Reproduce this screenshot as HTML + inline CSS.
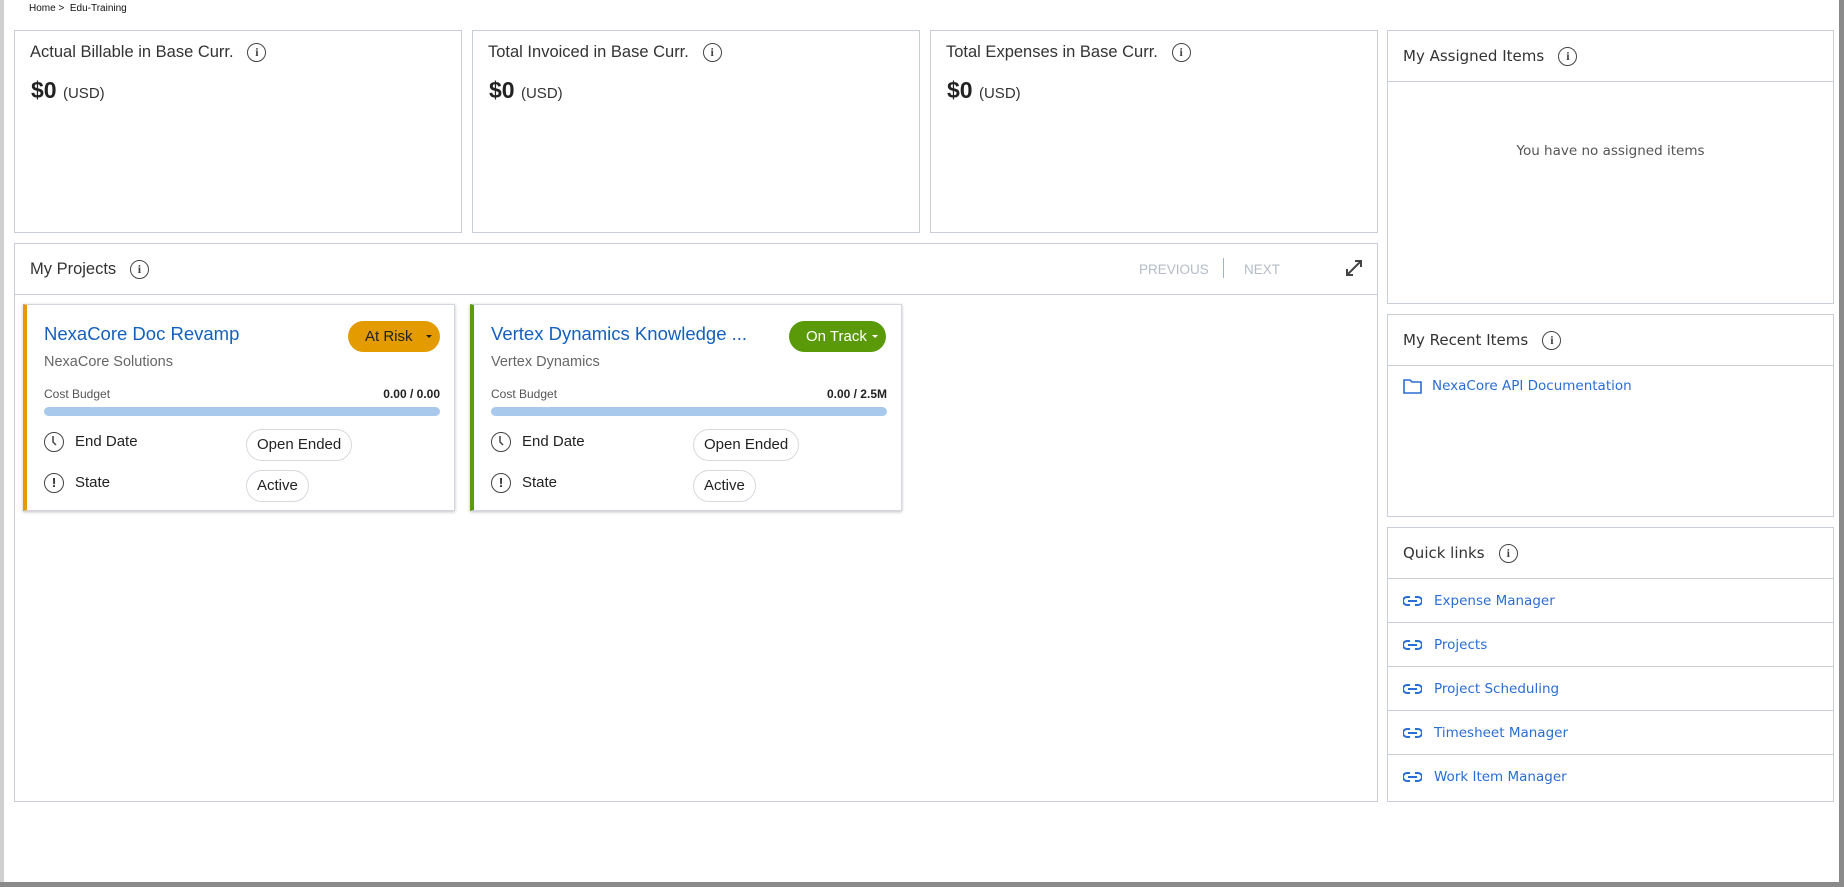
<!DOCTYPE html>
<html><head><meta charset="utf-8"><style>
*{box-sizing:border-box;margin:0;padding:0}
body{width:1844px;height:887px;background:#fff;font-family:"Liberation Sans",sans-serif;color:#333;position:relative;overflow:hidden}
.abs{position:absolute}
.card{position:absolute;border:1px solid #c9ced6;background:#fff}
.ttl{position:absolute;font-size:16.5px;color:#333}
.info{display:inline-block;width:19px;height:19px;border:1.5px solid #444;border-radius:50%;text-align:center;font:bold 12px/16px "Liberation Serif",serif;color:#444;vertical-align:middle}
.val{position:absolute;font-size:23px;font-weight:bold;color:#222}
.val span{font-size:15px;font-weight:normal;color:#333}
.pc{position:absolute;border:1px solid #d3d7dd;box-shadow:0 1px 3px rgba(0,0,0,.25);background:#fff}
.pt{position:absolute;left:17px;top:18px;font-size:18.5px;color:#1560bd}
.ps{position:absolute;left:17px;top:49px;font-size:14.5px;color:#666}
.badge{position:absolute;top:16px;height:31px;border-radius:16px;color:#fff;font-size:15px;line-height:31px;padding-left:17px}
.badge:after{content:"";position:absolute;right:8px;top:14px;border:3px solid transparent;border-top:3px solid currentColor}
.cb{position:absolute;left:17px;top:82px;font-size:12px;color:#555}
.cbv{position:absolute;right:14px;top:82px;font-size:12px;font-weight:bold;color:#222}
.bar{position:absolute;left:17px;right:14px;top:102px;height:9px;border-radius:5px;background:#a9c9ec}
.row{position:absolute;left:17px;font-size:15px;color:#222}
.ic{display:inline-block;width:20px;height:20px;border:1.6px solid #444;border-radius:50%;vertical-align:middle;margin-right:11px;position:relative;font:bold 13px/17px "Liberation Sans";text-align:center}
.pill{position:absolute;left:219px;height:32px;border:1px solid #d6d9de;border-radius:16px;padding:0 10px;line-height:30px;font-size:15px;color:#222}
.rh{position:absolute;left:0;right:0;height:51px;border-bottom:1px solid #c9ced6;font-family:"DejaVu Sans",sans-serif;font-size:15px;color:#333;padding-left:15px;line-height:51px}
.ql{position:absolute;left:0;right:0;height:44px;border-bottom:1px solid #c9ced6;font-family:"DejaVu Sans",sans-serif;font-size:13.5px;color:#2a6dd4;line-height:44px;padding-left:46px}
.ql svg{position:absolute;left:15px;top:16px}
</style></head><body>
<div class="abs" style="left:0;top:0;width:4px;height:887px;background:#cfcfcf"></div>
<div class="abs" style="right:0;top:0;width:5px;height:887px;background:#8a8a8a"></div>
<div class="abs" style="left:0;bottom:0;width:1844px;height:5px;background:#8a8a8a"></div>
<div class="abs" style="left:29px;top:3px;font-size:10px;color:#111">Home &gt;&nbsp; Edu-Training</div>

<div class="card" style="left:14px;top:30px;width:448px;height:203px">
<div class="ttl" style="left:15px;top:12px">Actual Billable in Base Curr. &nbsp;&nbsp;<span class="info">i</span></div>
<div class="val" style="left:16px;top:46px">$0 <span>(USD)</span></div></div>
<div class="card" style="left:472px;top:30px;width:448px;height:203px">
<div class="ttl" style="left:15px;top:12px">Total Invoiced in Base Curr. &nbsp;&nbsp;<span class="info">i</span></div>
<div class="val" style="left:16px;top:46px">$0 <span>(USD)</span></div></div>
<div class="card" style="left:930px;top:30px;width:448px;height:203px">
<div class="ttl" style="left:15px;top:12px">Total Expenses in Base Curr. &nbsp;&nbsp;<span class="info">i</span></div>
<div class="val" style="left:16px;top:46px">$0 <span>(USD)</span></div></div>

<div class="card" style="left:14px;top:243px;width:1364px;height:559px">
<div class="abs" style="left:0;right:0;top:0;height:51px;border-bottom:1px solid #c9ced6"></div>
<div class="ttl" style="left:15px;top:16px">My Projects &nbsp;&nbsp;<span class="info">i</span></div>
<div class="abs" style="left:1124px;top:18px;font-size:13.5px;color:#b5bcc6">PREVIOUS</div>
<div class="abs" style="left:1208px;top:14px;width:1px;height:20px;background:#9bb5d8"></div>
<div class="abs" style="left:1229px;top:18px;font-size:13.5px;color:#b5bcc6">NEXT</div>
<svg class="abs" style="left:1329px;top:14px" width="20" height="20" viewBox="0 0 20 20" fill="none" stroke="#444" stroke-width="2"><path d="M3 17L17 3M11 3h6v6M3 11v6h6"/></svg>

<div class="pc" style="left:8px;top:60px;width:432px;height:207px;border-left:4px solid #e39b00">
<div class="pt">NexaCore Doc Revamp</div><div class="ps">NexaCore Solutions</div>
<div class="badge" style="left:321px;width:92px;background:#e39b00;color:#222">At Risk</div>
<div class="cb">Cost Budget</div><div class="cbv">0.00 / 0.00</div><div class="bar"></div>
<div class="row" style="top:127px"><span class="ic"><svg width="17" height="17" viewBox="0 0 17 17" style="position:absolute;left:0;top:0"><path d="M8 3v6l3 3" stroke="#444" stroke-width="1.5" fill="none"/></svg></span>End Date</div>
<div class="pill" style="top:124px">Open Ended</div>
<div class="row" style="top:168px"><span class="ic">!</span>State</div>
<div class="pill" style="top:165px">Active</div></div>

<div class="pc" style="left:455px;top:60px;width:432px;height:207px;border-left:4px solid #5c9c0c">
<div class="pt">Vertex Dynamics Knowledge ...</div><div class="ps">Vertex Dynamics</div>
<div class="badge" style="left:315px;width:97px;background:#5a9a08">On Track</div>
<div class="cb">Cost Budget</div><div class="cbv">0.00 / 2.5M</div><div class="bar"></div>
<div class="row" style="top:127px"><span class="ic"><svg width="17" height="17" viewBox="0 0 17 17" style="position:absolute;left:0;top:0"><path d="M8 3v6l3 3" stroke="#444" stroke-width="1.5" fill="none"/></svg></span>End Date</div>
<div class="pill" style="top:124px">Open Ended</div>
<div class="row" style="top:168px"><span class="ic">!</span>State</div>
<div class="pill" style="top:165px">Active</div></div>
</div>

<div class="card" style="left:1387px;top:30px;width:447px;height:274px">
<div class="rh" style="top:0">My Assigned Items &nbsp;&nbsp;<span class="info">i</span></div>
<div class="abs" style="left:0;right:0;top:112px;text-align:center;font-family:'DejaVu Sans',sans-serif;font-size:13.5px;color:#555">You have no assigned items</div></div>

<div class="card" style="left:1387px;top:314px;width:447px;height:203px">
<div class="rh" style="top:0">My Recent Items &nbsp;&nbsp;<span class="info">i</span></div>
<svg class="abs" style="left:15px;top:64px" width="19" height="15" viewBox="0 0 19 15" fill="none" stroke="#2a6dd4" stroke-width="1.6"><path d="M1 1h6l2 2h9v11H1z"/></svg>
<div class="abs" style="left:44px;top:63px;font-family:'DejaVu Sans',sans-serif;font-size:13.5px;color:#2a6dd4">NexaCore API Documentation</div></div>

<div class="card" style="left:1387px;top:527px;width:447px;height:275px">
<div class="rh" style="top:0">Quick links &nbsp;&nbsp;<span class="info">i</span></div>
<div class="ql" style="top:51px"><svg width="19" height="12" viewBox="0 0 19 12" fill="none" stroke="#2a6dd4" stroke-width="2"><path d="M7 2H4a4 4 0 000 8h3M12 2h3a4 4 0 010 8h-3M5 6h9"/></svg>Expense Manager</div>
<div class="ql" style="top:95px"><svg width="19" height="12" viewBox="0 0 19 12" fill="none" stroke="#2a6dd4" stroke-width="2"><path d="M7 2H4a4 4 0 000 8h3M12 2h3a4 4 0 010 8h-3M5 6h9"/></svg>Projects</div>
<div class="ql" style="top:139px"><svg width="19" height="12" viewBox="0 0 19 12" fill="none" stroke="#2a6dd4" stroke-width="2"><path d="M7 2H4a4 4 0 000 8h3M12 2h3a4 4 0 010 8h-3M5 6h9"/></svg>Project Scheduling</div>
<div class="ql" style="top:183px"><svg width="19" height="12" viewBox="0 0 19 12" fill="none" stroke="#2a6dd4" stroke-width="2"><path d="M7 2H4a4 4 0 000 8h3M12 2h3a4 4 0 010 8h-3M5 6h9"/></svg>Timesheet Manager</div>
<div class="ql" style="top:227px;border-bottom:none"><svg width="19" height="12" viewBox="0 0 19 12" fill="none" stroke="#2a6dd4" stroke-width="2"><path d="M7 2H4a4 4 0 000 8h3M12 2h3a4 4 0 010 8h-3M5 6h9"/></svg>Work Item Manager</div>
</div>
</body></html>
